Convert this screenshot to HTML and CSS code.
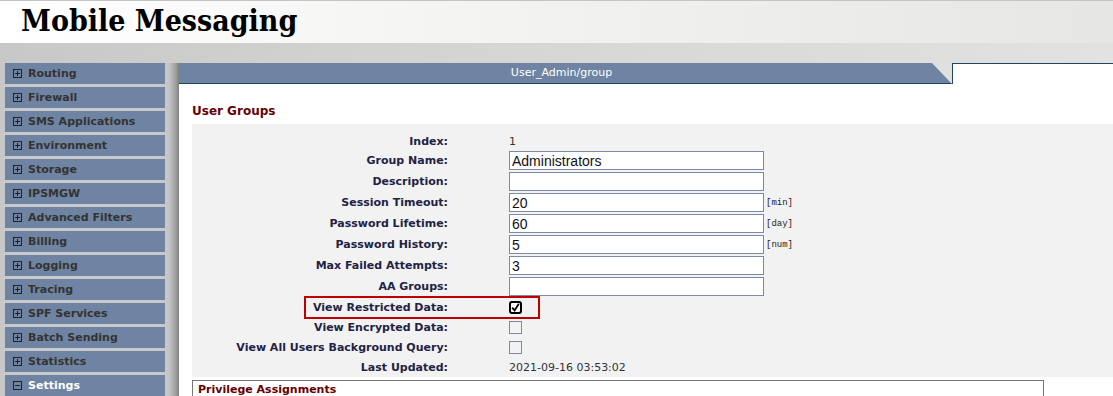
FILE: index.html
```html
<!DOCTYPE html>
<html lang="en">
<head>
    <meta charset="UTF-8">
    <title>Mobile Messaging</title>
    <link rel="stylesheet" href="styles.css">
</head>
<body>

    <!-- Header -->
    <header class="header">
        <h1>Mobile Messaging</h1>
    </header>

    <div class="main">
        <!-- Menu lateral -->
        <nav class="sidebar">
            <div class="menu-item"><span class="toggle plus"></span>Routing</div>
            <div class="menu-item"><span class="toggle plus"></span>Firewall</div>
            <div class="menu-item"><span class="toggle plus"></span>SMS Applications</div>
            <div class="menu-item"><span class="toggle plus"></span>Environment</div>
            <div class="menu-item"><span class="toggle plus"></span>Storage</div>
            <div class="menu-item"><span class="toggle plus"></span>IPSMGW</div>
            <div class="menu-item"><span class="toggle plus"></span>Advanced Filters</div>
            <div class="menu-item"><span class="toggle plus"></span>Billing</div>
            <div class="menu-item"><span class="toggle plus"></span>Logging</div>
            <div class="menu-item"><span class="toggle plus"></span>Tracing</div>
            <div class="menu-item"><span class="toggle plus"></span>SPF Services</div>
            <div class="menu-item"><span class="toggle plus"></span>Batch Sending</div>
            <div class="menu-item"><span class="toggle plus"></span>Statistics</div>
            <div class="menu-item active"><span class="toggle"></span>Settings</div>
        </nav>
        <div class="shadow"></div>

        <!-- Conteudo -->
        <section class="content">
            <div class="tabbar">
                <div class="tab">User_Admin/group</div>
                <div class="tab-rest"></div>
            </div>

            <h2 class="title">User Groups</h2>

            <div class="panel">
                <div class="row short">
                    <label>Index:</label>
                    <span class="value">1</span>
                </div>
                <div class="row">
                    <label>Group Name:</label>
                    <input type="text" value="Administrators">
                </div>
                <div class="row">
                    <label>Description:</label>
                    <input type="text" value="">
                </div>
                <div class="row">
                    <label>Session Timeout:</label>
                    <input type="text" value="20">
                    <span class="unit">[min]</span>
                </div>
                <div class="row">
                    <label>Password Lifetime:</label>
                    <input type="text" value="60">
                    <span class="unit">[day]</span>
                </div>
                <div class="row">
                    <label>Password History:</label>
                    <input type="text" value="5">
                    <span class="unit">[num]</span>
                </div>
                <div class="row">
                    <label>Max Failed Attempts:</label>
                    <input type="text" value="3">
                </div>
                <div class="row">
                    <label>AA Groups:</label>
                    <input type="text" value="">
                </div>
                <div class="row check">
                    <label>View Restricted Data:</label>
                    <span class="box checked">
                        <svg width="9" height="9" viewBox="0 0 9 9"><path d="M1.2 4.6 L3.6 7.4 L7.8 0.8" fill="none" stroke="#000" stroke-width="1.8"/></svg>
                    </span>
                    <span class="highlight"></span>
                </div>
                <div class="row check">
                    <label>View Encrypted Data:</label>
                    <span class="box"></span>
                </div>
                <div class="row check">
                    <label>View All Users Background Query:</label>
                    <span class="box"></span>
                </div>
                <div class="row check">
                    <label>Last Updated:</label>
                    <span class="value">2021-09-16 03:53:02</span>
                </div>
            </div>

            <div class="privileges">Privilege Assignments</div>
        </section>
    </div>

</body>
</html>
```

FILE: styles.css
```css
body {
    margin: 0;
    padding: 0;
    font-family: 'DejaVu Sans', Verdana, sans-serif;
    background-color: #d6d6d4;
    height: 396px;
    overflow: hidden;
}

/* Header */
.header {
    height: 42px;
    border-top: 1px solid #c4c4c4;
    background: linear-gradient(to right, #ffffff 0%, #f4f4f3 40%, #e6e6e4 100%);
}
.header h1 {
    margin: 0;
    padding-left: 21px;
    font-family: 'DejaVu Serif Condensed', 'DejaVu Serif', serif;
    font-stretch: condensed;
    font-size: 30px;
    line-height: 40px;
    font-weight: bold;
    color: #000;
}

/* Area principal */
.main {
    display: flex;
    padding-top: 20px;
    height: 333px;
    background: linear-gradient(to right, #c8c8c8 0%, #d4d4d2 40%, #e2e2e0 100%);
}
.sidebar {
    width: 160px;
    padding-left: 5px;
    background-color: #c8c8c8;
}
.menu-item {
    display: flex;
    align-items: center;
    height: 21px;
    margin-bottom: 3px;
    background-color: #6f84a2;
    color: #333;
    font-size: 11px;
    font-weight: bold;
}
.menu-item.active {
    color: #fff;
}
.toggle {
    position: relative;
    width: 7px;
    height: 7px;
    margin: 0 6px 0 8px;
    border: 1px solid #222;
}
.toggle::before {
    content: "";
    position: absolute;
    left: 1px;
    top: 3px;
    width: 5px;
    height: 1px;
    background: #222;
}
.toggle.plus::after {
    content: "";
    position: absolute;
    left: 3px;
    top: 1px;
    width: 1px;
    height: 5px;
    background: #222;
}
.shadow {
    width: 14px;
    background: linear-gradient(to right, #c8c8c8 0%, #c4c4c4 30%, #9c9c9c 80%, #7e7e7e 100%);
}

/* Conteudo */
.content {
    flex: 1;
    background-color: #fff;
}
.tabbar {
    display: flex;
    height: 21px;
    background-color: #e0e0de;
}
.tab {
    width: 773px;
    height: 20px;
    border-bottom: 1px solid #1f4566;
    background-color: #6f84a2;
    clip-path: polygon(0 0, 753px 0, 773px 100%, 0 100%);
    color: #fff;
    font-size: 11px;
    line-height: 20px;
    text-align: center;
    text-indent: -8px;
}
.tab-rest {
    flex: 1;
    background-color: #fff;
    border-top: 1px solid #1f4566;
    border-left: 1px solid #1f4566;
}
.title {
    margin: 0;
    padding: 14px 0 0 13px;
    height: 26px;
    color: #600;
    font-size: 12px;
    font-weight: bold;
    line-height: 26px;
}
.panel {
    position: relative;
    margin-left: 13px;
    padding-top: 7px;
    height: 246px;
    background-color: #f2f2f2;
}
.row {
    display: grid;
    grid-template-columns: 256px 255px auto;
    column-gap: 61px;
    align-items: center;
    height: 21px;
    position: relative;
}
.row.short {
    height: 19px;
    padding-top: 1px;
    box-sizing: border-box;
}
.row.check {
    height: 20px;
}
.row label {
    text-align: right;
    color: #222244;
    font-size: 11px;
    font-weight: bold;
}
.row .value {
    color: #333;
    font-size: 11px;
}
.row input {
    box-sizing: border-box;
    width: 255px;
    height: 19px;
    margin: 0;
    padding: 0 2px;
    border: 1px solid #7b8aa6;
    background: #fff;
    font-family: 'Liberation Sans', Arial, sans-serif;
    font-size: 14px;
    color: #111;
}
.unit {
    margin-left: -59px;
    font-family: 'Liberation Mono', 'Courier New', monospace;
    font-size: 9px;
    color: #222;
}
.box {
    box-sizing: border-box;
    display: flex;
    align-items: center;
    justify-content: center;
    width: 13px;
    height: 13px;
    border: 1px solid #7b8aa6;
}
.box.checked {
    border: 2px solid #000;
    border-radius: 3px;
    background: #fff;
}
.highlight {
    position: absolute;
    left: 112px;
    top: -1px;
    width: 232px;
    height: 19px;
    border: 2px solid #c00000;
}
.privileges {
    margin: 3px 69px 0 13px;
    padding: 2px 5px;
    border: 1px solid #777;
    border-bottom: none;
    color: #600;
    font-size: 11px;
    font-weight: bold;
    height: 20px;
}
```
